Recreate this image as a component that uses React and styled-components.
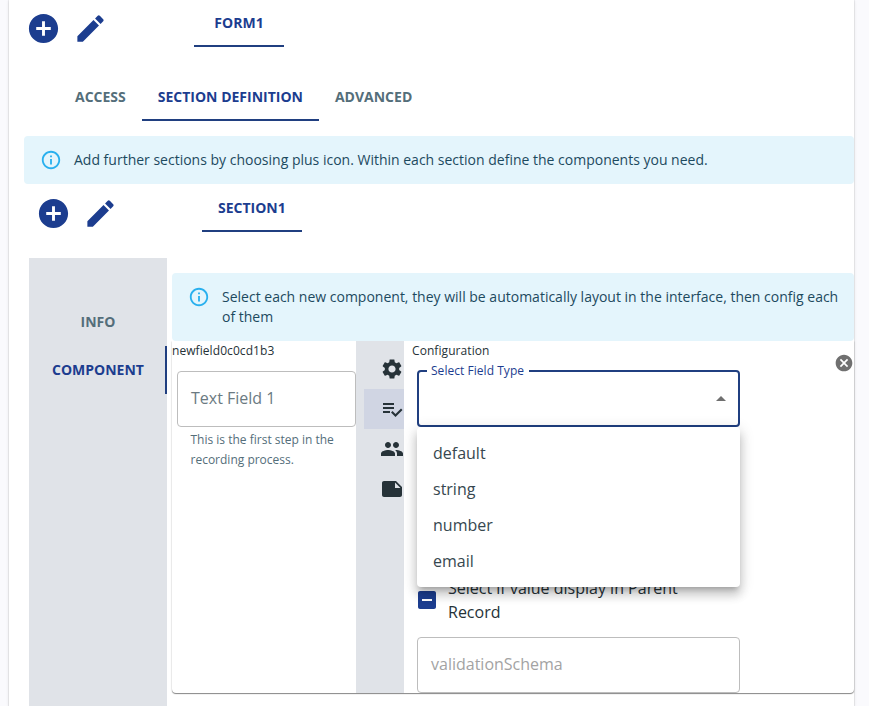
import React from "react";
import styled, { createGlobalStyle } from "styled-components";

const PRIMARY = "#1c3d8f";
const PRIMARY_LINE = "#203f80";

const GlobalStyle = createGlobalStyle`
  *, *::before, *::after { box-sizing: border-box; }
  body {
    margin: 0;
    background: #fafafd;
    color: #263238;
    font-family: "Open Sans", "Noto Sans", sans-serif;
    font-size: 14px;
    overflow: hidden;
  }
  button { font: inherit; border: 0; background: none; padding: 0; margin: 0; cursor: pointer; }
`;

const Page = styled.div`
  height: 706px;
  padding: 0 15px 0 9px;
  overflow: hidden;
`;

const Sheet = styled.main`
  height: 706px;
  display: flex;
  flex-direction: column;
  background: #fff;
  box-shadow: 0 0 1px rgba(49, 49, 49, 0.35), 0 1px 3px rgba(49, 49, 49, 0.15);
`;

const Toolbar = styled.header`
  display: flex;
  align-items: flex-start;
  flex: none;
  height: ${(p) => p.$height}px;
  padding-left: ${(p) => p.$indent}px;
`;

const Actions = styled.div`
  display: flex;
  gap: 12px;
  padding-top: ${(p) => p.$top}px;
  width: ${(p) => p.$width}px;
`;

const IconButton = styled.button`
  display: flex;
  flex: none;
  color: ${(p) => p.$color || PRIMARY};
`;

const Icon = styled.svg`
  display: block;
  flex: none;
  width: ${(p) => p.$size || 24}px;
  height: ${(p) => p.$size || 24}px;
  fill: currentColor;
`;

const TabList = styled.nav`
  display: flex;
  flex: none;
`;

const Tab = styled.button`
  height: 48px;
  min-width: ${(p) => p.$min || 0}px;
  padding: 0 16px 2px;
  border-bottom: 2px solid ${(p) => (p.$active ? PRIMARY_LINE : "transparent")};
  border-top: 2px solid transparent;
  color: ${(p) => (p.$active ? PRIMARY : "#546e7a")};
  font-size: 14px;
  font-weight: 700;
  line-height: 17px;
  white-space: nowrap;
`;

const FormTab = styled(Tab)`
  margin-top: -1px;
`;

const SubTabs = styled(TabList)`
  height: 63px;
  padding-left: 50px;
`;

const Alert = styled.section`
  display: flex;
  flex: none;
  margin-left: ${(p) => p.$indent || 0}px;
  height: ${(p) => p.$height}px;
  padding: 13px 12px 13px 16px;
  gap: 12px;
  border-radius: 4px;
  background: #e4f5fc;
  color: #1d4a5f;
  font-size: 14px;
  line-height: 20px;
`;

const AlertIcon = styled.span`
  color: #29b0ee;
`;

const AlertText = styled.p`
  margin: 0;
  padding-top: 1px;
`;

const Body = styled.div`
  display: flex;
  flex: 1;
  padding-left: 20px;
  gap: 5px;
  min-height: 0;
`;

const SideTabs = styled.nav`
  width: 138px;
  flex: none;
  padding-top: 40px;
  background: #e0e3e8;
`;

const SideTab = styled.button`
  display: block;
  width: 100%;
  height: 48px;
  padding-bottom: 2px;
  border-right: 2px solid ${(p) => (p.$active ? PRIMARY_LINE : "transparent")};
  border-left: 2px solid transparent;
  color: ${(p) => (p.$active ? PRIMARY : "#546e7a")};
  font-size: 14px;
  font-weight: 700;
`;

const Main = styled.div`
  flex: 1;
  min-width: 0;
  padding-top: 15px;
`;

const Editor = styled.section`
  display: grid;
  grid-template-columns: 184px 48px 1fr;
  height: 352px;
  border-radius: 0 0 4px 4px;
  box-shadow: 0 1px 1px rgba(0, 0, 0, 0.45), 0 0 2px rgba(0, 0, 0, 0.16);
  clip-path: inset(0 -4px -4px -4px);
`;

const Preview = styled.div`
  padding-top: 2px;
`;

const Caption = styled.div`
  height: 16px;
  font-size: 12px;
  line-height: 16px;
  letter-spacing: 0.07px;
`;

const TextField = styled.div`
  display: flex;
  align-items: center;
  width: ${(p) => p.$width}px;
  height: 56px;
  padding: 0 13px 2px;
  border: 1px solid #bdbdbd;
  border-radius: 4px;
  color: ${(p) => p.$color};
  font-size: 16px;
`;

const PreviewField = styled.div`
  padding: 12px 0 0 5px;
`;

const Helper = styled.p`
  width: 160px;
  margin: 3px 0 0 13.5px;
  color: #546e7a;
  font-size: 12px;
  line-height: 20px;
`;

const IconRail = styled.nav`
  padding: 8px 0 0 8px;
  background: #e0e3e8;
`;

const RailTab = styled.button`
  display: flex;
  align-items: center;
  width: 40px;
  height: 40px;
  padding-left: 16px;
  overflow: hidden;
  color: #263238;
  background: ${(p) => (p.$active ? "#d0d5e3" : "transparent")};
`;

const Settings = styled.div`
  display: flex;
  justify-content: space-between;
  padding: 2px 0 0 8px;
`;

const Fields = styled.div`
  width: 328px;
`;

const FieldArea = styled.div`
  position: relative;
  padding: 11px 0 0 5px;
`;

const Select = styled.fieldset`
  width: 323px;
  height: 63px;
  margin: -6px 0 0;
  padding: 0 12px 0 8px;
  border: 2px solid ${PRIMARY_LINE};
  border-radius: 4px;
`;

const SelectLabel = styled.legend`
  height: 14px;
  padding: 0 5px 0 4px;
  color: ${PRIMARY};
  font-size: 12px;
  line-height: 14px;
  letter-spacing: 0.04px;
`;

const SelectValue = styled.div`
  display: flex;
  justify-content: flex-end;
  padding-top: 9px;
  margin-right: -7px;
  color: #6f6f6f;
`;

const Menu = styled.ul`
  position: absolute;
  z-index: 2;
  top: 68px;
  left: 5px;
  width: 323px;
  margin: 0;
  padding: 8px 0;
  list-style: none;
  background: #fff;
  border-radius: 4px;
  box-shadow: 0 5px 5px -3px rgba(0, 0, 0, 0.2), 0 8px 10px 1px rgba(0, 0, 0, 0.14),
    0 3px 14px 2px rgba(0, 0, 0, 0.12);
`;

const MenuItem = styled.li`
  height: 36px;
  padding-left: 16px;
  color: #37474f;
  font-size: 16px;
  line-height: 36px;
`;

const CheckRow = styled.label`
  display: flex;
  align-items: center;
  gap: 9px;
  width: 310px;
  height: 48px;
  margin: 149px 0 13px -2px;
  font-size: 16px;
  line-height: 24px;
`;

const CheckMark = styled.span`
  color: ${PRIMARY};
`;

const CloseSlot = styled.div`
  padding-top: 10px;
`;

const PATHS = {
  add: "M12 2C6.48 2 2 6.48 2 12s4.48 10 10 10 10-4.48 10-10S17.52 2 12 2zm5 11h-4v4h-2v-4H7v-2h4V7h2v4h4v2z",
  edit: "M3 17.25V21h3.75L17.81 9.94l-3.75-3.75L3 17.25zM20.71 7.04c.39-.39.39-1.02 0-1.41l-2.34-2.34a.9959.9959 0 0 0-1.41 0l-1.83 1.83 3.75 3.75 1.83-1.83z",
  info: "M11 7h2v2h-2zm0 4h2v6h-2zm1-9C6.48 2 2 6.48 2 12s4.48 10 10 10 10-4.48 10-10S17.52 2 12 2zm0 18c-4.41 0-8-3.59-8-8s3.59-8 8-8 8 3.59 8 8-3.59 8-8 8z",
  settings:
    "M19.14 12.94c.04-.3.06-.61.06-.94 0-.32-.02-.64-.07-.94l2.03-1.58c.18-.14.23-.41.12-.61l-1.92-3.32c-.12-.22-.37-.29-.59-.22l-2.39.96c-.5-.38-1.03-.7-1.62-.94l-.36-2.54c-.04-.24-.24-.41-.48-.41h-3.84c-.24 0-.43.17-.47.41l-.36 2.54c-.59.24-1.13.57-1.62.94l-2.39-.96c-.22-.08-.47 0-.59.22L2.74 8.87c-.12.21-.08.47.12.61l2.03 1.58c-.05.3-.09.63-.09.94s.02.64.07.94l-2.03 1.58c-.18.14-.23.41-.12.61l1.92 3.32c.12.22.37.29.59.22l2.39-.96c.5.38 1.03.7 1.62.94l.36 2.54c.05.24.24.41.48.41h3.84c.24 0 .44-.17.47-.41l.36-2.54c.59-.24 1.13-.56 1.62-.94l2.39.96c.22.08.47 0 .59-.22l1.92-3.32c.12-.22.07-.47-.12-.61l-2.01-1.58zM12 15.6c-1.98 0-3.6-1.62-3.6-3.6s1.62-3.6 3.6-3.6 3.6 1.62 3.6 3.6-1.62 3.6-3.6 3.6z",
  checklist: "M14 10H3v2h11v-2zm0-4H3v2h11V6zM3 16h7v-2H3v2zm18-4.5l1.5 1.5-6.99 7-4.51-4.5 1.5-1.5 3.01 3L21 11.5z",
  people:
    "M16 11c1.66 0 2.99-1.34 2.99-3S17.66 5 16 5c-1.66 0-3 1.34-3 3s1.34 3 3 3zm-8 0c1.66 0 2.99-1.34 2.99-3S9.66 5 8 5C6.34 5 5 6.34 5 8s1.34 3 3 3zm0 2c-2.33 0-7 1.17-7 3.5V19h14v-2.5c0-2.33-4.67-3.5-7-3.5zm8 0c-.29 0-.62.02-.97.05 1.16.84 1.97 1.97 1.97 3.45V19h6v-2.5c0-2.33-4.67-3.5-7-3.5z",
  note: "M22 10l-6-6H4c-1.1 0-2 .9-2 2v12.01c0 1.1.9 1.99 2 1.99l16-.01c1.1 0 2-.89 2-1.99v-8zm-7-4.5l5.5 5.5H15V5.5z",
  arrowUp: "M7 14l5-5 5 5z",
  indeterminate: "M19 3H5c-1.1 0-2 .9-2 2v14c0 1.1.9 2 2 2h14c1.1 0 2-.9 2-2V5c0-1.1-.9-2-2-2zm-2 10H7v-2h10v2z",
  close:
    "M12 2C6.47 2 2 6.47 2 12s4.47 10 10 10 10-4.47 10-10S17.53 2 12 2zm5 13.59L15.59 17 12 13.41 8.41 17 7 15.59 10.59 12 7 8.41 8.41 7 12 10.59 15.59 7 17 8.41 13.41 12 17 15.59z",
};

function Glyph({ name, size }) {
  return (
    <Icon viewBox="0 0 24 24" $size={size} aria-hidden="true">
      <path d={PATHS[name]} />
    </Icon>
  );
}

function EditActions({ top, width }) {
  return (
    <Actions $top={top} $width={width}>
      <IconButton aria-label="Add">
        <Glyph name="add" size={35} />
      </IconButton>
      <IconButton aria-label="Edit">
        <Glyph name="edit" size={35} />
      </IconButton>
    </Actions>
  );
}

function InfoAlert({ indent, height, children }) {
  return (
    <Alert $indent={indent} $height={height}>
      <AlertIcon>
        <Glyph name="info" size={22} />
      </AlertIcon>
      <AlertText>{children}</AlertText>
    </Alert>
  );
}

const fieldTypes = ["default", "string", "number", "email"];
const railTabs = ["settings", "checklist", "people", "note"];

export default function App() {
  return (
    <Page>
      <GlobalStyle />
      <Sheet>
        <Toolbar $height={73} $indent={17}>
          <EditActions top={11} width={168} />
          <FormTab $active $min={90}>FORM1</FormTab>
        </Toolbar>
        <SubTabs>
          <Tab>ACCESS</Tab>
          <Tab $active>SECTION DEFINITION</Tab>
          <Tab>ADVANCED</Tab>
        </SubTabs>
        <InfoAlert indent={15} height={48}>
          Add further sections by choosing plus icon. Within each section define the components you need.
        </InfoAlert>
        <Toolbar $height={74} $indent={27}>
          <EditActions top={12} width={166} />
          <Tab $active $min={90}>SECTION1</Tab>
        </Toolbar>
        <Body>
          <SideTabs>
            <SideTab>INFO</SideTab>
            <SideTab $active>COMPONENT</SideTab>
          </SideTabs>
          <Main>
            <InfoAlert height={68}>
              Select each new component, they will be automatically layout in the interface, then config each of them
            </InfoAlert>
            <Editor>
              <Preview>
                <Caption>newfield0c0cd1b3</Caption>
                <PreviewField>
                  <TextField $width={179} $color="#6b7a82">Text Field 1</TextField>
                  <Helper>This is the first step in the recording process.</Helper>
                </PreviewField>
              </Preview>
              <IconRail>
                {railTabs.map((name) => (
                  <RailTab key={name} $active={name === "checklist"} aria-label={name}>
                    <Glyph name={name} />
                  </RailTab>
                ))}
              </IconRail>
              <Settings>
                <Fields>
                  <Caption>Configuration</Caption>
                  <FieldArea>
                    <Select>
                      <SelectLabel>Select Field Type</SelectLabel>
                      <SelectValue>
                        <Glyph name="arrowUp" />
                      </SelectValue>
                    </Select>
                    <Menu>
                      {fieldTypes.map((type) => (
                        <MenuItem key={type}>{type}</MenuItem>
                      ))}
                    </Menu>
                    <CheckRow>
                      <CheckMark>
                        <Glyph name="indeterminate" />
                      </CheckMark>
                      <span>Select if value display in Parent Record</span>
                    </CheckRow>
                    <TextField $width={323} $color="#a3a3a3">validationSchema</TextField>
                  </FieldArea>
                </Fields>
                <CloseSlot>
                  <IconButton $color="#707070" aria-label="Remove">
                    <Glyph name="close" size={20} />
                  </IconButton>
                </CloseSlot>
              </Settings>
            </Editor>
          </Main>
        </Body>
      </Sheet>
    </Page>
  );
}
